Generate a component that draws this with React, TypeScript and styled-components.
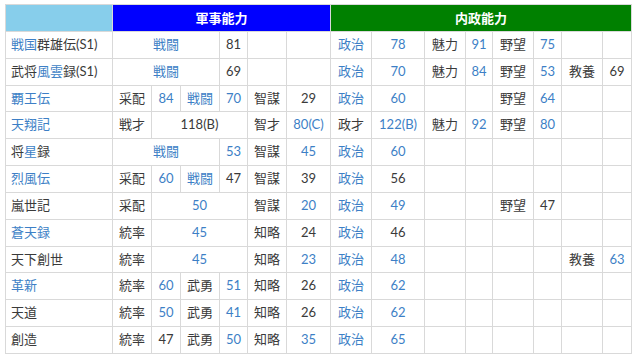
import React from 'react'
import styled, { createGlobalStyle } from 'styled-components'

type Cell = { t: string; span?: number; blue?: boolean }
type Seg = { t: string; blue?: boolean }
type Row = { title: Seg[]; mil: Cell[]; pol: Cell[] }

const c = (t: string, span = 1): Cell => ({ t, span })
const b = (t: string, span = 1): Cell => ({ t, span, blue: true })
const e = (n: number): Cell[] => Array.from({ length: n }, () => c(''))

const rows: Row[] = [
  {
    title: [{ t: '戦国', blue: true }, { t: '群雄伝(S1)' }],
    mil: [b('戦闘', 3), c('81'), ...e(2)],
    pol: [b('政治'), b('78'), c('魅力'), b('91'), c('野望'), b('75'), ...e(2)],
  },
  {
    title: [{ t: '武将' }, { t: '風雲', blue: true }, { t: '録(S1)' }],
    mil: [b('戦闘', 3), c('69'), ...e(2)],
    pol: [b('政治'), b('70'), c('魅力'), b('84'), c('野望'), b('53'), c('教養'), c('69')],
  },
  {
    title: [{ t: '覇王伝', blue: true }],
    mil: [c('采配'), b('84'), b('戦闘'), b('70'), c('智謀'), c('29')],
    pol: [b('政治'), b('60'), ...e(2), c('野望'), b('64'), ...e(2)],
  },
  {
    title: [{ t: '天翔記', blue: true }],
    mil: [c('戦才'), c('118(B)', 3), c('智才'), b('80(C)')],
    pol: [c('政才'), b('122(B)'), c('魅力'), b('92'), c('野望'), b('80'), ...e(2)],
  },
  {
    title: [{ t: '将' }, { t: '星', blue: true }, { t: '録' }],
    mil: [b('戦闘', 3), b('53'), c('智謀'), b('45')],
    pol: [b('政治'), b('60'), ...e(6)],
  },
  {
    title: [{ t: '烈風伝', blue: true }],
    mil: [c('采配'), b('60'), b('戦闘'), c('47'), c('智謀'), c('39')],
    pol: [b('政治'), c('56'), ...e(6)],
  },
  {
    title: [{ t: '嵐世記' }],
    mil: [c('采配'), b('50', 3), c('智謀'), b('20')],
    pol: [b('政治'), b('49'), ...e(2), c('野望'), c('47'), ...e(2)],
  },
  {
    title: [{ t: '蒼天録', blue: true }],
    mil: [c('統率'), b('45', 3), c('知略'), c('24')],
    pol: [b('政治'), c('46'), ...e(6)],
  },
  {
    title: [{ t: '天下創世' }],
    mil: [c('統率'), b('45', 3), c('知略'), b('23')],
    pol: [b('政治'), b('48'), ...e(4), c('教養'), b('63')],
  },
  {
    title: [{ t: '革新', blue: true }],
    mil: [c('統率'), b('60'), c('武勇'), b('51'), c('知略'), c('26')],
    pol: [b('政治'), b('62'), ...e(6)],
  },
  {
    title: [{ t: '天道' }],
    mil: [c('統率'), b('50'), c('武勇'), b('41'), c('知略'), c('26')],
    pol: [b('政治'), b('62'), ...e(6)],
  },
  {
    title: [{ t: '創造' }],
    mil: [c('統率'), c('47'), c('武勇'), b('50'), c('知略'), b('35')],
    pol: [b('政治'), b('65'), ...e(6)],
  },
]

// column widths, border to border, measured off the screenshot
const widths = [107, 39, 29, 39, 28, 39, 44, 41, 53, 41, 27, 41, 28, 41, 29]

const GlobalStyle = createGlobalStyle`
  body {
    margin: 0;
    background: #ffffff;
    font-family: Lato, "Noto Sans CJK JP", sans-serif;
    font-size: 13px;
    color: #3a3a3a;
  }
`

const Page = styled.div`
  padding: 4px 0 0 5px;
`

const Table = styled.table`
  border-collapse: collapse;
  table-layout: fixed;
  width: 626px;
  border: 1px solid #d9d9d9;
`

const HeadCell = styled.th<{ $bg: string }>`
  background: ${p => p.$bg};
  color: #ffffff;
  font-weight: bold;
  font-size: 13px;
  height: 26px;
  padding: 0;
  line-height: 26px;
  border: 1px solid #d9d9d9;
  text-align: center;
`

const Td = styled.td<{ $left?: boolean }>`
  border: 1px solid #d9d9d9;
  padding: 3px ${p => (p.$left ? '5px' : '0')};
  line-height: 19.83px;
  text-align: ${p => (p.$left ? 'left' : 'center')};
  white-space: nowrap;
  overflow: hidden;
`

const Text = styled.span<{ $blue?: boolean }>`
  color: ${p => (p.$blue ? '#3d7fc6' : '#3a3a3a')};
`

const App: React.FC = () => (
  <Page>
    <GlobalStyle />
    <Table>
      <colgroup>
        {widths.map((w, i) => (
          <col key={i} style={{ width: w }} />
        ))}
      </colgroup>
      <thead>
        <tr>
          <HeadCell $bg="#87ceeb" />
          <HeadCell $bg="#0000ff" colSpan={6}>軍事能力</HeadCell>
          <HeadCell $bg="#008000" colSpan={8}>内政能力</HeadCell>
        </tr>
      </thead>
      <tbody>
        {rows.map((r, i) => (
          <tr key={i}>
            <Td $left>
              {r.title.map((s, j) => (
                <Text key={j} $blue={s.blue}>{s.t}</Text>
              ))}
            </Td>
            {[...r.mil, ...r.pol].map((cell, j) => (
              <Td key={j} colSpan={cell.span}>
                <Text $blue={cell.blue}>{cell.t}</Text>
              </Td>
            ))}
          </tr>
        ))}
      </tbody>
    </Table>
  </Page>
)

export default App
